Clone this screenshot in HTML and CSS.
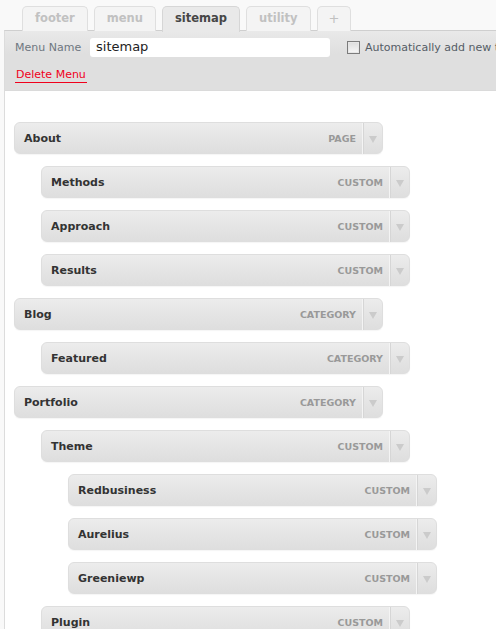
FILE: index.html
```html
<!DOCTYPE html>
<html>
<head>
<meta charset="utf-8">
<link rel="stylesheet" href="styles.css">
</head>
<body>
<div class="page">
  <div class="tabs">
    <div class="tab">footer</div>
    <div class="tab">menu</div>
    <div class="tab active">sitemap</div>
    <div class="tab">utility</div>
    <div class="tab plus">+</div>
  </div>
  <div class="panel">
    <div class="panel-head">
      <div class="name-row">
        <label class="name-label">Menu Name</label>
        <div class="name-input">sitemap</div>
        <span class="checkbox"></span>
        <span class="auto-label">Automatically add new top-level pages</span>
      </div>
      <div class="delete-row"><span class="delete">Delete Menu</span></div>
    </div>
    <div class="panel-body">
      <ul class="items">
        <li class="item d0"><span class="title">About</span><span class="type">Page</span><span class="arrow"></span></li>
        <li class="item d1"><span class="title">Methods</span><span class="type">Custom</span><span class="arrow"></span></li>
        <li class="item d1"><span class="title">Approach</span><span class="type">Custom</span><span class="arrow"></span></li>
        <li class="item d1"><span class="title">Results</span><span class="type">Custom</span><span class="arrow"></span></li>
        <li class="item d0"><span class="title">Blog</span><span class="type">Category</span><span class="arrow"></span></li>
        <li class="item d1"><span class="title">Featured</span><span class="type">Category</span><span class="arrow"></span></li>
        <li class="item d0"><span class="title">Portfolio</span><span class="type">Category</span><span class="arrow"></span></li>
        <li class="item d1"><span class="title">Theme</span><span class="type">Custom</span><span class="arrow"></span></li>
        <li class="item d2"><span class="title">Redbusiness</span><span class="type">Custom</span><span class="arrow"></span></li>
        <li class="item d2"><span class="title">Aurelius</span><span class="type">Custom</span><span class="arrow"></span></li>
        <li class="item d2"><span class="title">Greeniewp</span><span class="type">Custom</span><span class="arrow"></span></li>
        <li class="item d1"><span class="title">Plugin</span><span class="type">Custom</span><span class="arrow"></span></li>
      </ul>
    </div>
  </div>
</div>
</body>
</html>
```
FILE: styles.css
```css
html, body {
  margin: 0;
  padding: 0;
  overflow: hidden;
  background: #f9f9f9;
  font-family: "DejaVu Sans", Verdana, sans-serif;
}
.page {
  width: 640px;
  height: 629px;
}
.tabs {
  display: flex;
  gap: 6px;
  padding: 6px 0 0 22px;
  height: 24px;
}
.tab {
  box-sizing: border-box;
  height: 25px;
  padding: 0 12px;
  border: 1px solid #dfdfdf;
  border-bottom: none;
  border-radius: 5px 5px 0 0;
  background: #f4f4f4;
  color: #c1c1c1;
  font-weight: bold;
  font-size: 11.5px;
  line-height: 23px;
}
.tab.active {
  background: #e9e9e9;
  color: #464646;
  border-color: #d6d6d6;
  height: 26px;
  position: relative;
  z-index: 1;
}
.tab.plus {
  font-weight: normal;
  font-size: 13px;
  padding: 0 11px;
}
.panel {
  margin-left: 4px;
  border-left: 1px solid #dcdcdc;
  border-top: 1px solid #cfcfcf;
  height: 600px;
}
.panel-head {
  background: linear-gradient(#e9e9e9, #dfdfdf 40%);
  height: 59px;
  border-bottom: 1px solid #dadada;
}
.name-row {
  display: flex;
  align-items: center;
  padding: 7px 0 0 10px;
  height: 19px;
  white-space: nowrap;
}
.name-label {
  font-size: 11px;
  color: #6e7780;
  width: 75px;
}
.name-input {
  box-sizing: border-box;
  width: 240px;
  height: 19px;
  background: #fff;
  border-radius: 3px;
  font-size: 13px;
  color: #222;
  padding: 0 6px;
  line-height: 18px;
}
.checkbox {
  box-sizing: border-box;
  width: 13px;
  height: 13px;
  margin-left: 17px;
  border: 1px solid #7c7c7c;
  background: linear-gradient(#dcdcdc, #f7f7f7);
  box-shadow: inset 0 0 0 1px #e6e6e6;
}
.auto-label {
  margin-left: 5px;
  font-size: 11px;
  color: #555d66;
}
.delete-row {
  padding: 6px 0 0 10px;
}
.delete {
  display: inline-block;
  font-size: 11px;
  color: #f0001c;
  border-bottom: 1px solid #f0001c;
  line-height: 13px;
  padding: 0 1px 1px 1px;
}
.panel-body {
  background: #fff;
}
.items {
  list-style: none;
  margin: 0;
  padding: 31px 0 0 9px;
  display: flex;
  flex-direction: column;
  gap: 12px;
}
.item {
  box-sizing: border-box;
  width: 369px;
  height: 32px;
  display: flex;
  align-items: center;
  border: 1px solid #dedede;
  border-radius: 6px;
  background: linear-gradient(#ececec, #dedede);
  box-shadow: 0 1px 1px rgba(0,0,0,0.04);
}
.item.d1 { margin-left: 27px; }
.item.d2 { margin-left: 54px; }
.title {
  flex: 1;
  padding-left: 9px;
  font-size: 11px;
  font-weight: bold;
  color: #333;
  padding-top: 1px;
}
.type {
  font-size: 9.5px;
  font-weight: bold;
  color: #999;
  text-transform: uppercase;
  padding-right: 6px;
}
.arrow {
  box-sizing: border-box;
  width: 20px;
  height: 31px;
  border-left: 1px solid #f4f4f4;
  position: relative;
  box-shadow: inset 1px 0 0 #d6d6d6;
}
.arrow::after {
  content: "";
  position: absolute;
  left: 6px;
  top: 13px;
  border-left: 4px solid transparent;
  border-right: 4px solid transparent;
  border-top: 7px solid #cbcbcb;
}
```
